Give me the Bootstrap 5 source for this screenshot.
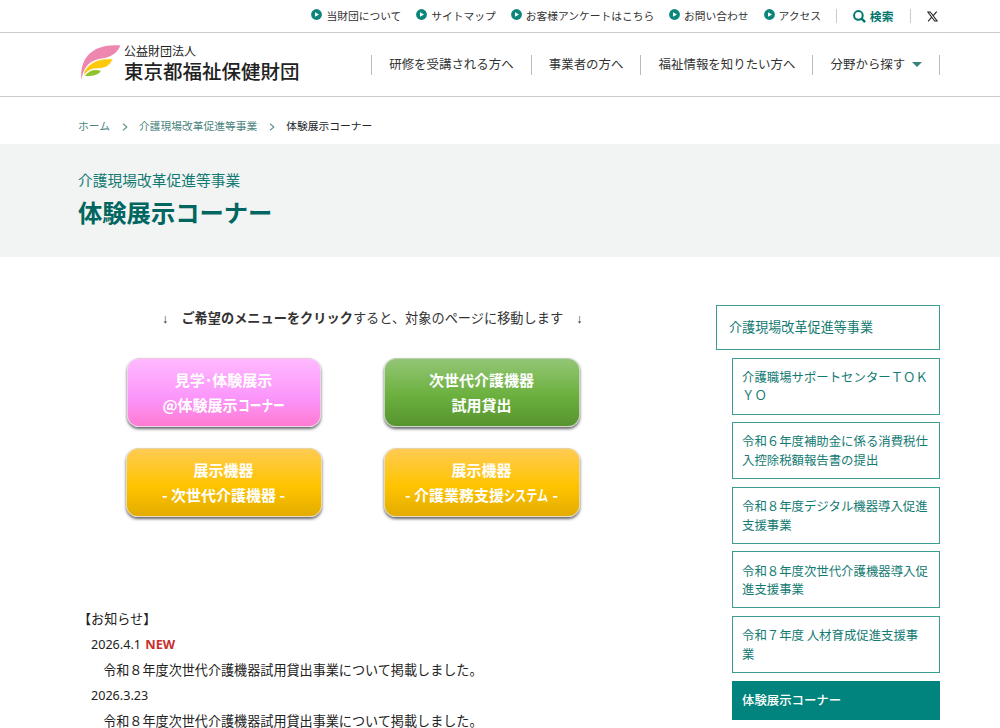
<!DOCTYPE html>
<html lang="ja">
<head>
<meta charset="utf-8">
<meta name="viewport" content="width=device-width, initial-scale=1">
<title>体験展示コーナー | 東京都福祉保健財団</title>
<link href="https://cdn.jsdelivr.net/npm/bootstrap@5.3.0/dist/css/bootstrap.min.css" rel="stylesheet">
<style>
body{font-family:"Noto Sans CJK JP",sans-serif;font-size:13.1px;color:#333;background:#fff;height:728px;overflow:hidden;white-space:nowrap;line-height:1}
a{color:inherit;text-decoration:none}
svg{display:block;flex:none}
.utility{height:33px;border-bottom:1px solid #ccc;padding-left:311.4px;font-size:10.75px}
.utility a{height:31px;gap:4px;margin-right:14.9px}
.utility a svg{margin-top:-3px}
.utility .rule{width:1px;height:14px;background:#ccc}
.utility .find{color:#00766d;font-weight:700;font-size:11.8px;gap:4px;margin:0 17px 0 16px}
.utility .find svg{margin:0}
.masthead{height:64px;border-bottom:1px solid #ccc;padding-left:80px}
.brand{width:291px;gap:3px;margin-top:-4px}
.brand-top{font-size:12px;line-height:16px;color:#222}
.brand-name{font-size:19.5px;line-height:24px;font-weight:500;color:#222}
.gnav{font-size:12.45px}
.gnav a{height:20px;border-left:1px solid #bbb;padding:0 17px 0 17.2px;gap:7px}
.gnav a:last-child{border-right:1px solid #bbb}
.crumbs{height:47px;padding:12px 0 0 78px;font-size:10.75px;color:#4c8580}
.hero{height:113px;background:#f2f4f4;padding:27px 0 0 78px;color:#00665f}
.hero p{font-size:14.75px;line-height:18px;color:#137a72}
.hero h1{font-size:24.3px;line-height:30px;font-weight:700;margin:8px 0 0}
.content{width:590px;margin-left:78px}
.lead-line{height:68px;padding:54px 0 0 84px;line-height:14px;font-size:13.2px}
.arrow{font-family:"Liberation Sans",sans-serif;font-size:12.5px}
.menu-grid{display:grid;grid-template-columns:196px 196px;gap:21px 62px;margin:33px 0 0 47.5px}
.menu-grid a{height:69px;border-radius:12px;color:#fff;font-weight:700;font-size:15px;line-height:25px;border:1px solid rgba(225,225,225,.75);box-shadow:0 2px 3px rgba(50,50,60,.75);padding-top:8px;text-align:center}
.c-pink{background:linear-gradient(#ffb9ff,#fb94fa 60%,#ff7bd2);margin:0 1px}
.c-green{background:linear-gradient(#93c675,#6bb03e 55%,#57942f)}
.c-gold{background:linear-gradient(#ffcb53,#ffc400 55%,#e3ac00)}
.kana{display:inline-block;transform-origin:0 50%}
.kana-a{width:47px;transform:scaleX(.78)}
.kana-b{width:45px;transform:scaleX(.74)}
.news{margin-top:89px;line-height:25.5px;color:#222}
.news .entry{margin-left:-1px}
.date{font-family:"Noto Sans",sans-serif;font-size:12.6px;padding-left:13px}
.date b{color:#c9302c;margin-left:1px;font-size:12.8px}
.side{width:224px;margin:48px 0 0 48px;color:#137a72}
.side a{display:block;border:1px solid #3a9b93}
.side .top{height:45px;padding:14px 12px;line-height:14px}
.side .sub{height:57px;margin:7.6px 0 0 16px;padding:9.3px 9px;font-size:12.4px;line-height:18.6px}
.side .now{height:39px;background:#00847d;border-color:#00847d;color:#fff;font-weight:500}
</style>
</head>
<body>
<svg width="0" height="0" class="position-absolute"><defs>
<symbol id="go" viewBox="0 0 11 11"><circle cx="5.5" cy="5.5" r="5.4" fill="#0c857b"/><path d="M4 3.2 8 5.5 4 7.8Z" fill="#fff"/></symbol>
<symbol id="chev" viewBox="0 0 6 8"><path d="M1 .6 4.8 4 1 7.4" fill="none" stroke="#5a8b87" stroke-width="1.1"/></symbol>
</defs></svg>
<nav class="utility d-flex align-items-center">
<a href="#" class="d-flex align-items-center"><svg width="11" height="11"><use href="#go"/></svg>当財団について</a>
<a href="#" class="d-flex align-items-center"><svg width="11" height="11"><use href="#go"/></svg>サイトマップ</a>
<a href="#" class="d-flex align-items-center"><svg width="11" height="11"><use href="#go"/></svg>お客様アンケートはこちら</a>
<a href="#" class="d-flex align-items-center"><svg width="11" height="11"><use href="#go"/></svg>お問い合わせ</a>
<a href="#" class="d-flex align-items-center"><svg width="11" height="11"><use href="#go"/></svg>アクセス</a>
<span class="rule"></span>
<a href="#" class="find d-flex align-items-center"><svg width="13" height="13" viewBox="0 0 13 13" fill="none" stroke="#00766d"><circle cx="5.4" cy="5.4" r="4.3" stroke-width="2"/><path d="m8.6 8.6 3.500 3.500" stroke-width="2.4"/></svg>検索</a>
<span class="rule"></span>
<a href="#" class="d-flex align-items-center ms-3" aria-label="X"><svg class="mt-0" width="11" height="11" viewBox="0 0 12 11" fill="none" stroke="#222"><path d="M1 .6H3.6L11 10.4H8.4Z" stroke-width="1.1"/><path d="M10.6.3 6.8 4.6M5.1 6.3 1.2 10.7" stroke-width="1.2"/></svg></a>
</nav>
<header class="masthead d-flex align-items-center">
<a href="#" class="brand d-flex align-items-center">
<svg width="41" height="37" viewBox="0 0 41 37"><path d="M1.500 36C-1 14 13-1 40.500 1.500 36 12 27 14 19 15 9 17 3 24 1.500 36Z" fill="#ed87b0"/><path d="M4 28C10 17 21 14 33 15 28 26 20 24 13 25 9 26 6 28 4 32Z" fill="#ffc90b" stroke="#fff" stroke-width=".6"/><path d="M5 32C9 26 15 25 21 27 17 32 11 32 5 32Z" fill="#8fc32c"/></svg>
<span><span class="brand-top d-block">公益財団法人</span><span class="brand-name d-block">東京都福祉保健財団</span></span></a>
<nav class="gnav d-flex">
<a href="#" class="d-flex align-items-center">研修を受講される方へ</a>
<a href="#" class="d-flex align-items-center">事業者の方へ</a>
<a href="#" class="d-flex align-items-center">福祉情報を知りたい方へ</a>
<a href="#" class="d-flex align-items-center">分野から探す<svg width="10" height="5"><path d="M0 0H10L5 5Z" fill="#37827c"/></svg></a>
</nav>
</header>
<nav class="crumbs d-flex align-items-center"><a href="#">ホーム</a><svg class="ms-2 me-2" width="13" height="8" viewBox="-4 0 13 8"><use href="#chev" width="6" height="8"/></svg><a href="#">介護現場改革促進等事業</a><svg class="ms-2 me-2" width="13" height="8" viewBox="-4 0 13 8"><use href="#chev" width="6" height="8"/></svg><span class="text-dark">体験展示コーナー</span></nav>
<section class="hero"><p class="m-0">介護現場改革促進等事業</p><h1>体験展示コーナー</h1></section>
<div class="d-flex align-items-start">
<main class="content">
<p class="lead-line m-0"><span class="arrow">↓</span>　<b>ご希望のメニューをクリック</b>すると、対象のページに移動します　<span class="arrow">↓</span></p>
<div class="menu-grid">
<a href="#" class="c-pink">見学･体験展示<br>@体験展示<span class="kana kana-a">コーナー</span></a>
<a href="#" class="c-green">次世代介護機器<br>試用貸出</a>
<a href="#" class="c-gold">展示機器<br>- 次世代介護機器 -</a>
<a href="#" class="c-gold">展示機器<br>- 介護業務支援<span class="kana kana-b">システム</span> -</a>
</div>
<div class="news">
<div>【お知らせ】</div>
<div class="date">2026.4.1 <b>NEW</b></div>
<div class="entry">　　令和８年度次世代介護機器試用貸出事業について掲載しました。</div>
<div class="date">2026.3.23</div>
<div class="entry">　　令和８年度次世代介護機器試用貸出事業について掲載しました。</div>
</div>
</main>
<aside class="side">
<a href="#" class="top">介護現場改革促進等事業</a>
<a href="#" class="sub">介護職場サポートセンターＴＯＫ<br>ＹＯ</a>
<a href="#" class="sub">令和６年度補助金に係る消費税仕<br>入控除税額報告書の提出</a>
<a href="#" class="sub">令和８年度デジタル機器導入促進<br>支援事業</a>
<a href="#" class="sub">令和８年度次世代介護機器導入促<br>進支援事業</a>
<a href="#" class="sub">令和７年度 人材育成促進支援事<br>業</a>
<a href="#" class="sub now">体験展示コーナー</a>
</aside>
</div>
<script src="https://cdn.jsdelivr.net/npm/bootstrap@5.3.0/dist/js/bootstrap.bundle.min.js"></script>
</body>
</html>
